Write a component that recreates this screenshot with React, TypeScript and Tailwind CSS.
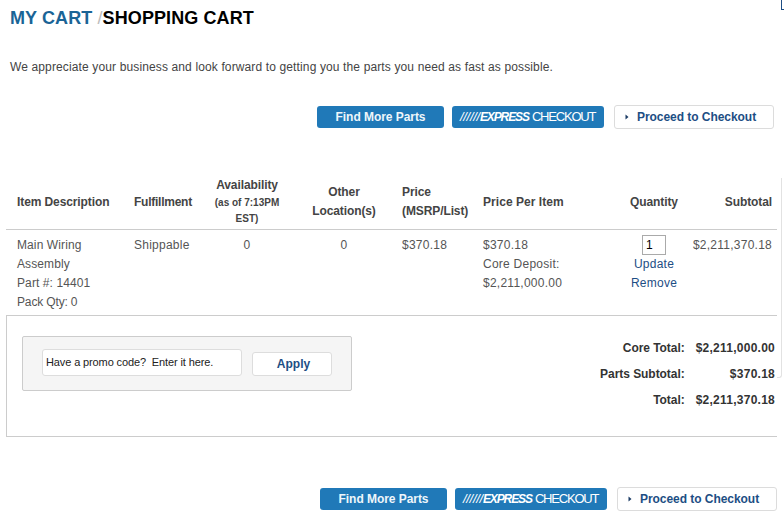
const ff = "font-['Liberation_Sans',Arial,sans-serif]";
const cols = "grid grid-cols-[121px_64px_112px_82px_80px_159px_60px_1fr]";

function Buttons() {
  return (
    <div className="flex items-center">
      <button className="w-[127px] h-[22px] rounded-[3px] bg-[#2079b8] text-[#eef6fb] text-[12px] font-bold tracking-[-0.05px] flex items-center justify-center">Find More Parts</button>
      <button className="ml-[8px] w-[152px] h-[22px] rounded-[3px] bg-[#2079b8] text-white flex items-center pl-[8px] whitespace-nowrap">
        <span className="italic tracking-[-0.3px] text-[13px]">//////</span>
        <span className="font-bold italic tracking-[-1.1px] text-[12px]">EXPRESS</span>
        <span className="ml-[3px] tracking-[-1.2px] text-[13px]">CHECKOUT</span>
      </button>
      <button className="ml-[10px] w-[160px] h-[24px] rounded-[3px] bg-white border border-[#dcdcdc] text-[#1d4e84] text-[12px] font-bold tracking-[-0.05px] flex items-center pl-[10px]">
        <svg width="4" height="6" viewBox="0 0 4 6" className="mr-[8px]"><path d="M0.5 0.5L3.5 3L0.5 5.5Z" fill="#1d3d66" /></svg>
        Proceed to Checkout
      </button>
    </div>
  );
}

export default function App() {
  return (
    <div className={`${ff} relative w-[784px] h-[519px] overflow-hidden bg-white text-[#444] text-[12px]`}>
      <div className="absolute right-0 top-0 w-[3px] h-[10px] border-l border-b border-[#1d4e84]" />
      <div className="absolute left-[777px] top-[178px] w-[5px] h-[200px] border-r border-b border-[#e2e2e2] rounded-br-[3px]" />
      <h1 className="pl-[10px] pt-[8px] text-[18px] leading-[20px] font-bold text-black tracking-[0.1px]">
        <span className="text-[#1a6496]">MY CART </span>
        <span className="text-[#bbb] font-normal">/</span>SHOPPING CART
      </h1>
      <p className="pl-[10px] mt-[32px] text-[12px] leading-[14px] tracking-[0.13px] text-[#444]">We appreciate your business and look forward to getting you the parts you need as fast as possible.</p>
      <div className="flex justify-end pr-[10px] mt-[31px]"><Buttons /></div>

      <div className="mt-[43px] ml-[6px] w-[771px]">
        <div className={`${cols} h-[58px] pt-[2px] border-b border-[#ccc] font-bold text-[#444] tracking-[-0.1px] items-center`}>
          <div className="pl-[11px]">Item Description</div>
          <div className="pl-[7px] whitespace-nowrap tracking-[-0.25px]">Fulfillment</div>
          <div className="text-center leading-[16px] mt-[1px]">
            Availability
            <div className="text-[10px] px-[16px] mt-[2px] leading-[16px] tracking-[0px]">(as of 7:13PM EST)</div>
          </div>
          <div className="text-center leading-[19px] mt-[1px]">Other<br />Location(s)</div>
          <div className="pl-[17px] leading-[19px] mt-[1px] whitespace-nowrap">Price<br />(MSRP/List)</div>
          <div className="pl-[18px] tracking-[0.05px]">Price Per Item</div>
          <div className="text-center">Quantity</div>
          <div className="text-right pr-[5px]">Subtotal</div>
        </div>
        <div className={`${cols} h-[85px] pt-[6px] leading-[19px] tracking-[0.25px] text-[#555]`}>
          <div className="pl-[11px] tracking-[0.1px]">Main Wiring<br />Assembly<br />Part #: 14401<br /><span className="tracking-[-0.15px]">Pack Qty: 0</span></div>
          <div className="pl-[7px]">Shippable</div>
          <div className="text-center">0</div>
          <div className="text-center">0</div>
          <div className="pl-[17px]">$370.18</div>
          <div className="pl-[18px]">$370.18<br />Core Deposit:<br />$2,211,000.00</div>
          <div className="flex flex-col items-center text-[#1d4e84] whitespace-nowrap">
            <div className="-mt-[1px] w-[24px] h-[20px] border border-[#aaa] text-black text-[12px] leading-[18px] pl-[3px] self-center">1</div>
            <span>Update</span>
            <span>Remove</span>
          </div>
          <div className="text-right pr-[5px] whitespace-nowrap">$2,211,370.18</div>
        </div>
      </div>

      <div className="ml-[6px] w-[771px] h-[122px] border-l border-t border-b border-[#ccc] flex justify-between">
        <div className="ml-[15px] mt-[20px] w-[330px] h-[55px] rounded-[2px] bg-[#f5f5f5] border border-[#ccc] flex items-start pl-[19px] pt-[12px]">
          <div className="w-[200px] h-[27px] rounded-[3px] bg-white border border-[#ddd] text-[#222] text-[11px] leading-[25px] pl-[3px] tracking-[-0.12px] whitespace-pre">Have a promo code?  Enter it here.</div>
          <button className="ml-[10px] mt-[3px] w-[80px] h-[24px] rounded-[3px] bg-white border border-[#ddd] text-[#1d4e84] font-bold text-[12px] pl-[3px]">Apply</button>
        </div>
        <div className="pt-[22px] pr-[2px] font-bold text-[#333] leading-[20px] grid grid-cols-[auto_auto] gap-x-[11px] gap-y-[6px] self-start text-right tracking-[0.25px]">
          <span className="tracking-[-0.05px]">Core Total:</span><span>$2,211,000.00</span>
          <span className="tracking-[-0.05px]">Parts Subtotal:</span><span>$370.18</span>
          <span className="tracking-[-0.05px]">Total:</span><span>$2,211,370.18</span>
        </div>
      </div>

      <div className="flex justify-end pr-[7px] mt-[50px]"><Buttons /></div>
    </div>
  );
}
